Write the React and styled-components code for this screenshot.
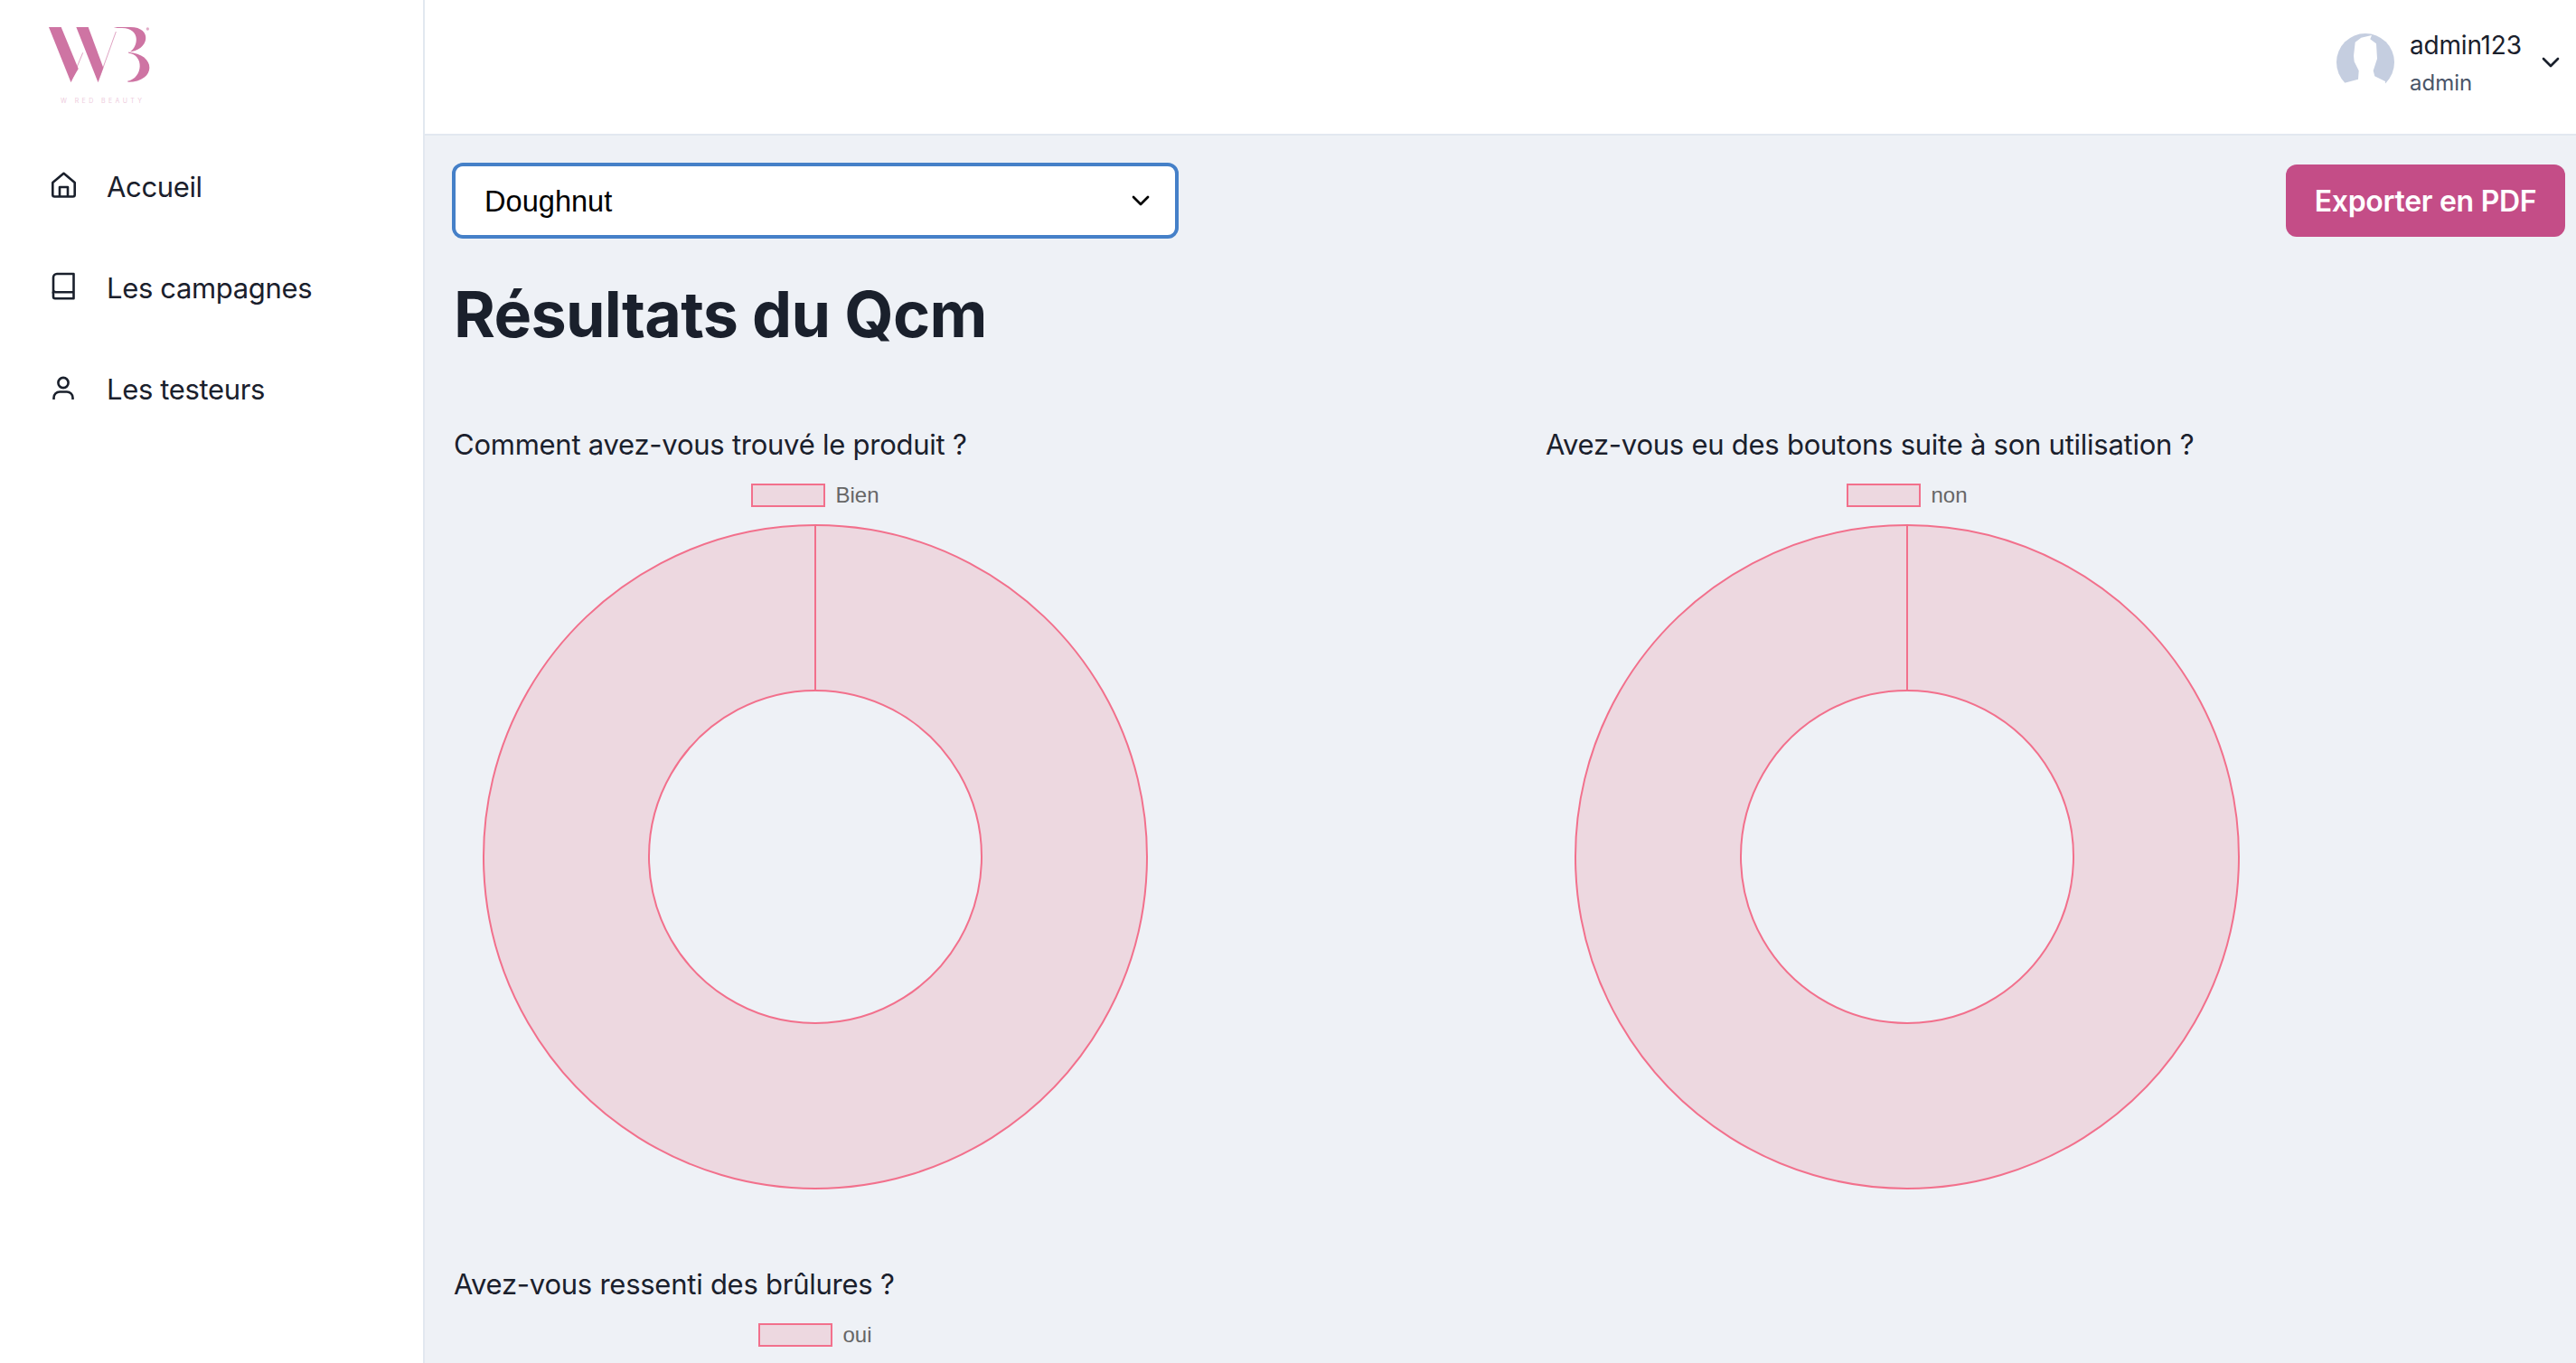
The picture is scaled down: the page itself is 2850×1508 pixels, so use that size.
import styled, { createGlobalStyle } from "styled-components";

const GlobalStyle = createGlobalStyle`
  * { box-sizing: border-box; }
  html, body { margin: 0; padding: 0; height: 100%; }
  body { font-family: Inter, "Noto Sans", sans-serif; color: #1a202c; background: #eef1f6; overflow: hidden; }
`;

const questions = [
  { title: "Comment avez-vous trouvé le produit ?", answer: "Bien" },
  { title: "Avez-vous eu des boutons suite à son utilisation ?", answer: "non" },
  { title: "Avez-vous ressenti des brûlures ?", answer: "oui" },
];

function Logo() {
  return (
    <LogoBlock>
      <svg width="135" height="83" viewBox="0 0 405 249">
        <g fill="#ce74a3">
          <path d="M27 30H68L125 168L100 212Z" />
          <path d="M118 30H158L208 165L190 212Z" />
          <path d="M242 30H298C372 30 362 108 290 113C385 118 385 212 290 212L288 209C340 200 345 120 290 116C325 100 335 34 270 33L254 33Z" />
          <circle cx="355" cy="36" r="5" opacity="0.6" />
        </g>
        <path d="M100 212L140 115M190 212L250 45" stroke="#ce74a3" strokeWidth="2" fill="none" />
      </svg>
      <LogoCaption>W RED BEAUTY</LogoCaption>
    </LogoBlock>
  );
}

function HomeIcon() {
  return (
    <NavSvg viewBox="0 0 40 40">
      <path d="M8.3 17L20.5 6.8L32.7 17V30.5a2 2 0 0 1-2 2H10.3a2 2 0 0 1-2-2Z" />
      <path d="M16 32.5V22H25V32.5" />
    </NavSvg>
  );
}

function BookIcon() {
  return (
    <NavSvg viewBox="0 0 40 40">
      <path d="M13 6H31.5V33.2H11a2 2 0 0 1-2-2V10a4 4 0 0 1 4-4Z" />
      <path d="M9 27.2a1 1 0 0 1 2-1H31.5" />
    </NavSvg>
  );
}

function UserIcon() {
  return (
    <NavSvg viewBox="0 0 40 40">
      <circle cx="20" cy="14.5" r="5.6" />
      <path d="M9.5 33V31a6.5 6.5 0 0 1 6.5-6.5H24a6.5 6.5 0 0 1 6.5 6.5V33" />
    </NavSvg>
  );
}

function Avatar() {
  return (
    <svg width="64" height="64" viewBox="0 0 64 64">
      <circle cx="32" cy="32" r="32" fill="#c5cee0" />
      <path
        d="M9 54.7L24 50.7L24.7 41.3L19.7 31.3L19 24.7L20.7 9.7L27.3 4.7L39 2L37.3 6.3L44 11.3L45 28L40.7 41.3L42.3 47.3L54 53V64H9Z"
        fill="#fff"
      />
    </svg>
  );
}

function Chevron({ size }) {
  return (
    <svg width={size} height={size} viewBox="0 0 24 24" fill="none" stroke="currentColor" strokeWidth="2" strokeLinecap="round" strokeLinejoin="round">
      <path d="M6 9l6 6 6-6" />
    </svg>
  );
}

function Doughnut() {
  const c = 369;
  const outer = 367;
  const inner = 184;
  const ring = `M${c} ${c - outer}A${outer} ${outer} 0 1 1 ${c - 0.01} ${c - outer}Z M${c} ${c - inner}A${inner} ${inner} 0 1 0 ${c + 0.01} ${c - inner}Z`;
  return (
    <ChartSvg width="738" height="738" viewBox="0 0 738 738">
      <path d={ring} fill="#edd8e0" fillRule="evenodd" stroke="#f2708c" strokeWidth="2" />
      <path d={`M${c} ${c - outer}V${c - inner}`} stroke="#f2708c" strokeWidth="2" />
    </ChartSvg>
  );
}

export default function App() {
  return (
    <>
      <GlobalStyle />
      <Page>
        <Sidebar>
          <Logo />
          <Nav>
            <NavItem><HomeIcon /><NavLabel>Accueil</NavLabel></NavItem>
            <NavItem><BookIcon /><NavLabel>Les campagnes</NavLabel></NavItem>
            <NavItem><UserIcon /><NavLabel>Les testeurs</NavLabel></NavItem>
          </Nav>
        </Sidebar>
        <Content>
          <Header>
            <Avatar />
            <UserInfo>
              <UserName>admin123</UserName>
              <UserRole>admin</UserRole>
            </UserInfo>
            <ChevronWrap><Chevron size={32} /></ChevronWrap>
          </Header>
          <Main>
            <Toolbar>
              <SelectWrap>
                <Select defaultValue="Doughnut">
                  <option>Doughnut</option>
                  <option>Bar</option>
                  <option>Pie</option>
                </Select>
                <SelectArrow><Chevron size={32} /></SelectArrow>
              </SelectWrap>
              <ExportButton>Exporter en PDF</ExportButton>
            </Toolbar>
            <Title>Résultats du Qcm</Title>
            <Grid>
              {questions.map((q) => (
                <Question key={q.title}>
                  <QuestionTitle>{q.title}</QuestionTitle>
                  <Legend>
                    <LegendBox />
                    <LegendLabel>{q.answer}</LegendLabel>
                  </Legend>
                  <Doughnut />
                </Question>
              ))}
            </Grid>
          </Main>
        </Content>
      </Page>
    </>
  );
}

const Page = styled.div`
  display: flex;
  width: 100%;
  height: 100vh;
  overflow: hidden;
`;

const Sidebar = styled.aside`
  flex: 0 0 470px;
  background: #fff;
  border-right: 2px solid #e2e8f0;
`;

const LogoBlock = styled.div`
  height: 149px;
  padding: 20px 0 0 45px;
`;

const LogoCaption = styled.div`
  font-size: 7px;
  line-height: 9px;
  margin-left: 22px;
  letter-spacing: 3.4px;
  color: #eeccdd;
  white-space: nowrap;
`;

const Nav = styled.nav`
  display: flex;
  flex-direction: column;
`;

const NavItem = styled.a`
  display: flex;
  align-items: center;
  height: 112px;
  padding-left: 50px;
  gap: 28px;
  font-size: 31px;
  letter-spacing: -0.35px;
  color: #1a202c;
`;

const NavLabel = styled.span`
  padding-top: 2px;
`;

const NavSvg = styled.svg`
  width: 40px;
  height: 40px;
  fill: none;
  stroke: #1a202c;
  stroke-width: 2.6;
  stroke-linejoin: round;
`;

const Content = styled.div`
  flex: 1;
  display: flex;
  flex-direction: column;
  min-width: 0;
`;

const Header = styled.header`
  flex: 0 0 150px;
  display: flex;
  align-items: center;
  justify-content: flex-end;
  background: #fff;
  border-bottom: 2px solid #e2e8f0;
  padding: 0 12px 10px 0;
`;

const UserInfo = styled.div`
  display: flex;
  flex-direction: column;
  margin-left: 17px;
  width: 140px;
  padding-top: 3px;
`;

const UserName = styled.span`
  font-size: 28px;
  line-height: 40px;
  letter-spacing: -0.2px;
  color: #1a202c;
`;

const UserRole = styled.span`
  font-size: 24px;
  line-height: 40px;
  margin-top: 2px;
  color: #4a5568;
`;

const ChevronWrap = styled.div`
  display: flex;
  color: #1a202c;
`;

const Main = styled.main`
  flex: 1;
  padding: 30px 12px 0 30px;
  overflow: hidden;
`;

const Toolbar = styled.div`
  display: flex;
  align-items: center;
  justify-content: space-between;
`;

const SelectWrap = styled.div`
  position: relative;
  width: 804px;
  height: 84px;
`;

const Select = styled.select`
  appearance: none;
  width: 100%;
  height: 100%;
  padding: 0 80px 0 32px;
  font-family: "Liberation Sans", Arial, sans-serif;
  font-size: 32.6px;
  color: #000;
  background: #fff;
  border: 4px solid #4580c8;
  border-radius: 12px;
  outline: none;
`;

const SelectArrow = styled.span`
  position: absolute;
  right: 26px;
  top: 26px;
  display: flex;
  color: #000;
  pointer-events: none;
`;

const ExportButton = styled.button`
  width: 309px;
  height: 80px;
  border: none;
  border-radius: 12px;
  background: #c44d87;
  color: #fff;
  font-family: Inter, sans-serif;
  font-size: 32px;
  font-weight: 600;
  letter-spacing: -0.3px;
`;

const Title = styled.h1`
  margin: 40px 0 0;
  padding-left: 2px;
  font-size: 70px;
  line-height: 88px;
  letter-spacing: -0.7px;
  font-weight: 700;
  color: #1a202c;
`;

const Grid = styled.div`
  display: grid;
  grid-template-columns: 1208px 1fr;
  row-gap: 0;
  margin-top: 76px;
`;

const Question = styled.section`
  display: flex;
  flex-direction: column;
  width: 804px;
  height: 929px;
`;

const QuestionTitle = styled.h2`
  margin: 0;
  padding-left: 2px;
  font-size: 31px;
  line-height: 48px;
  letter-spacing: -0.25px;
  font-weight: 400;
  color: #1a202c;
  white-space: nowrap;
`;

const Legend = styled.div`
  display: flex;
  align-items: center;
  justify-content: center;
  gap: 11px;
  margin-top: 19px;
  height: 26px;
`;

const LegendBox = styled.span`
  width: 82px;
  height: 26px;
  background: #edd8e0;
  border: 2px solid #f2708c;
`;

const LegendLabel = styled.span`
  font-family: "Liberation Sans", Arial, sans-serif;
  font-size: 24px;
  color: #666;
`;

const ChartSvg = styled.svg`
  display: block;
  flex: none;
  margin: 18px auto 0;
`;
